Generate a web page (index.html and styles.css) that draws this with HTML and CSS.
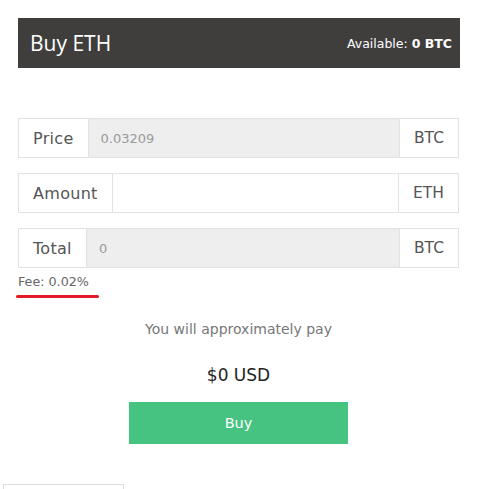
FILE: index.html
```html
<!DOCTYPE html>
<html>
<head>
<meta charset="utf-8">
<link rel="stylesheet" href="styles.css">
</head>
<body>
<div class="panel">
  <div class="header">
    <h2 class="title">Buy ETH</h2>
    <div class="avail">Available: <b>0 BTC</b></div>
  </div>
  <div class="form">
    <div class="group">
      <span class="label">Price</span>
      <span class="field field-ro">0.03209</span>
      <span class="addon">BTC</span>
    </div>
    <div class="group">
      <span class="label">Amount</span>
      <span class="field"></span>
      <span class="addon">ETH</span>
    </div>
    <div class="group">
      <span class="label">Total</span>
      <span class="field field-ro">0</span>
      <span class="addon">BTC</span>
    </div>
  </div>
  <div class="fee">Fee: 0.02%</div>
  <div class="underline"></div>
  <p class="approx">You will approximately pay</p>
  <p class="usd">$0 USD</p>
  <div class="actions"><button class="buy">Buy</button></div>
</div>
<div class="footer-box"></div>
</body>
</html>
```
FILE: styles.css
```css
html, body { margin: 0; padding: 0; background: #fff; }
body { font-family: "DejaVu Sans", sans-serif; overflow: hidden; height: 489px; }
.panel { width: 442px; margin: 18px 0 0 18px; }
.header {
  height: 50px; background: #403d3d; display: flex; align-items: center;
  justify-content: space-between; padding: 0 8px 0 12px;
}
.title { margin: 0; font-family: "Open Sans", sans-serif; font-weight: 400; font-size: 21px; color: #fff; }
.avail { font-size: 12.5px; color: #fff; }
.avail b { font-weight: 700; }
.form { margin-top: 50px; width: 441px; display: flex; flex-direction: column; gap: 15px; }
.group { display: flex; height: 40px; box-sizing: border-box; border: 1px solid #e2e2e2; }
.label {
  display: flex; align-items: center; padding: 0 14px 0 14px; font-size: 16px; color: #555;
  border-right: 1px solid #e2e2e2; letter-spacing: 0.3px;
}
.field { flex: 1; display: flex; align-items: center; padding-left: 12px; font-size: 13px; color: #9a9a9a; background: #fff; }
.field-ro { background: #eeeeee; }
.addon {
  display: flex; align-items: center; padding: 0 14px; font-size: 15.5px; color: #555;
  border-left: 1px solid #e2e2e2;
}
.fee { margin-top: 6px; font-size: 12.7px; color: #666; }
.underline { width: 83px; height: 3px; background: #e31b25; border-radius: 2px; margin: 6px 0 0 -2px; }
.approx { text-align: center; margin: 23px 0 0; font-size: 14px; color: #777; width: 441px; }
.usd { text-align: center; margin: 28px 0 0; font-size: 17px; color: #222; width: 441px; }
.actions { display: flex; justify-content: center; width: 441px; margin-top: 17px; }
.buy {
  width: 219px; height: 42px; border: 0; background: #46c380; color: #fff;
  font-family: "DejaVu Sans", sans-serif; font-size: 14.5px;
}
.footer-box { width: 119px; height: 20px; margin: 40px 0 0 3px; border: 1px solid #dcdcdc; border-bottom: 0; }
```
